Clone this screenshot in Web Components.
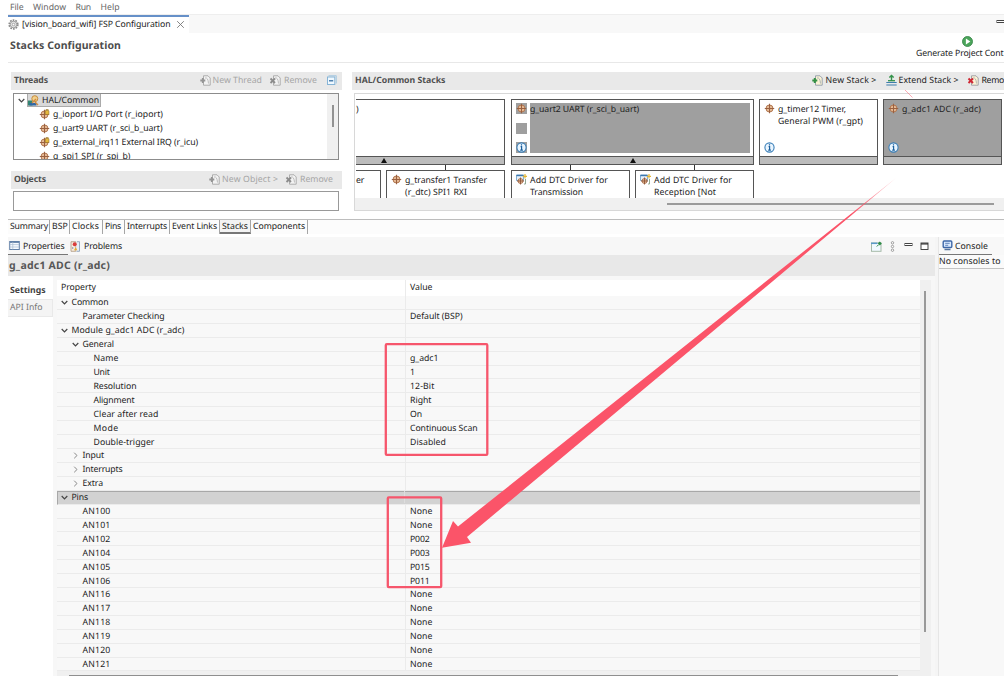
<!DOCTYPE html>
<html lang="en">
<head>
<meta charset="utf-8">
<title>FSP Configuration</title>
<style>
    html, body {
        margin: 0;
        width: 1004px;
        height: 692px;
        overflow: hidden;
        background: #fff;
    }
</style>
</head>
<body>
<config-app></config-app>

<script>
// Label whose letter spacing is tuned so that it takes up the width in its "w" attribute
class FitText extends HTMLElement
{
    constructor()
    {
        super();
        this.attachShadow({mode: 'open'});
    }

    connectedCallback()
    {
        this.shadowRoot.innerHTML =
        `<style>
            :host { display: block; flex: none; white-space: pre; }
            span { display: inline-block; }
        </style><span><slot></slot></span>`;

        const w = Number(this.getAttribute('w'));
        if (!w) return;

        const span = this.shadowRoot.querySelector('span');
        const natural = span.getBoundingClientRect().width;
        span.style.letterSpacing = (w - natural) / this.textContent.length + 'px';
        this.style.width = w + 'px';
    }
}

const module = `
    <circle cx="5.5" cy="5.5" r="3.5" fill="#e8bd98" stroke="#b1764f"/>
    <path d="M5.5 .8V10.200M.8 5.500H10.200" stroke="#9a6040" stroke-width="1.100"/>`;

const page = (mark, paper, edge) => `
    <path d="M3.500 .8h4.500l2.200 2.200v7.200H3.500z" fill="${paper}" stroke="${edge}" stroke-width=".9"/>
    <path d="M5 3q3-1 3.500 5.500" fill="none" stroke="${edge}" stroke-width=".7"/>${mark}`;

const icons = {
    module: module,
    lock: module + `<rect x="6.300" y="1.500" width="3.600" height="4" rx=".6" fill="#e5b83b" stroke="#a07a2a" stroke-width=".7"/><path d="M7 1.500V.5h2.200v1" fill="none" stroke="#a07a2a" stroke-width=".7"/>`,
    add: page('<path d="M.3 5.500h5M2.800 3v5" stroke="#359044" stroke-width="2"/>', '#fbf3d5', '#8e9aa8'),
    addOff: page('<path d="M.3 5.500h5M2.800 3v5" stroke="#959595" stroke-width="1.800"/>', '#f3f3f3', '#a6a6a6'),
    remove: page('<path d="M.5 3.500l4.500 4.500m0-4.500L.5 8" stroke="#cf2733" stroke-width="1.900"/>', '#fbf3d5', '#9a9aa0'),
    removeOff: page('<path d="M.5 3.500l4.500 4.500m0-4.500L.5 8" stroke="#8c8c8c" stroke-width="1.800"/>', '#f3f3f3', '#a6a6a6'),
    extend: `<path d="M5.500 0v6M3.300 2.500l2.200-2 2.200 2" fill="none" stroke="#35924a" stroke-width="1.400"/><path d="M2 5.700h7" stroke="#35924a" stroke-width="1.300"/><path d="M.3 7.500h10.400M.3 10h10.400" stroke="#3f7eae" stroke-width="1.200"/>`,
    collapse: `<path d="M2.500 .7h7.800v7.800" fill="none" stroke="#a9cbe2"/><rect x="1.500" y="2" width="7.300" height="7.500" fill="#eff8ff" stroke="#86b4d6"/><path d="M3 5.800h4.200" stroke="#28649c" stroke-width="1.200"/>`,
    gear: `<circle cx="5.500" cy="5.500" r="4.300" fill="none" stroke="#8b8b8b" stroke-width="1.700" stroke-dasharray="1.700 1"/><circle cx="5.500" cy="5.500" r="3.200" fill="#ececec" stroke="#999"/><circle cx="5.500" cy="5.500" r="1.300" fill="#fff" stroke="#888" stroke-width=".7"/>`,
    hal: `<path d="M0 5.500h4.500v5H0z" fill="#34866f"/><path d="M1.500 8h7v2.500h-7z" fill="#2f67a5"/><circle cx="6.800" cy="3.700" r="3" fill="#f2d08a" stroke="#c78d3e"/><path d="M4 8l4-4M7 7l3 3" stroke="#cf8a40" stroke-width="1.400"/>`,
    info: `<circle cx="5.500" cy="5.500" r="4.600" fill="#e9f5ff" stroke="#3a7fb8" stroke-width="1.100"/><path d="M5.500 2.300v1.300M4.600 4.700h1v3.500M4.200 8.200h2.700" fill="none" stroke="#1a5f9d" stroke-width="1.200"/>`,
    driver: `<path d="M.5 1h7v5.500h-7z" fill="#e7f1fa" stroke="#659ac6" stroke-width=".8"/><path d="M.5 1.500h7" stroke="#3c78b0" stroke-width="1.400"/><circle cx="4.500" cy="7" r="2.500" fill="#e8bd98" stroke="#a36a48" stroke-width=".8"/><path d="M4.500 3.500v7M1 7h7" stroke="#8d5638" stroke-width=".9"/><path d="M9 0v4.600M6.800 2.300h4.200" stroke="#e3b535" stroke-width="1.200"/><path d="M9.500 5v5H8" fill="none" stroke="#8fa894"/>`,
    run: `<circle cx="5.500" cy="5.500" r="5" fill="#4ca55b" stroke="#2d7f40" stroke-width=".8"/><path d="M3.900 2.600v5.800L8.300 5.500z" fill="#fff"/>`,
    props: `<rect x=".7" y="1.500" width="9.600" height="8" fill="#f8fbff" stroke="#6280a8"/><path d="M1 2.200h9" stroke="#6280a8" stroke-width="1.400"/><path d="M3.800 2v7.500M1 4.600h9M1 7h9" stroke="#a9bad0" stroke-width=".7"/>`,
    problems: `<path d="M1 .7h4.800v9.600H1z" fill="#f6ecdf" stroke="#ad977f" stroke-width=".8"/><path d="M7 .7h2.500v9.600H6.500" fill="#e7eef7" stroke="#8299b5" stroke-width=".8"/><circle cx="4.700" cy="3.300" r="2" fill="#d93c3c"/><path d="M4 9.300l1.700-3 1.600 3z" fill="#e8ac32"/><path d="M2 7h1.300" stroke="#51709a"/>`,
    pin: `<rect x=".5" y="2" width="9.500" height="8.300" fill="#f2faff" stroke="#a5b9a8"/><path d="M0 2.300h6.500" stroke="#5b9ac9" stroke-width="1.500"/><path d="M5.800 5.500l2-2" stroke="#2d8b45"/><path d="M6.800 2.300l2-1.800 2 2-2 2z" fill="#2d8b45"/>`,
    dots: `<g fill="#fff" stroke="#888" stroke-width=".8"><circle cx="5.500" cy="1.800" r="1.200"/><circle cx="5.500" cy="5.500" r="1.200"/><circle cx="5.500" cy="9.200" r="1.200"/></g>`,
    min: `<rect x="2" y="2.500" width="7" height="2" fill="#fff" stroke="#444"/>`,
    max: `<rect x="2" y="2" width="7" height="6.500" fill="#fff" stroke="#333" stroke-width=".9"/><path d="M2 2.900h7" stroke="#333" stroke-width="1.300"/>`,
    console: `<rect x="1.200" y="1" width="8.600" height="6.500" rx="1" fill="#dcebff" stroke="#3d67a8" stroke-width="1.400"/><path d="M3.200 3.300h4.500M3.200 5.300h3" stroke="#3d67a8" stroke-width=".8"/><path d="M2.500 9.500h6" stroke="#56749f" stroke-width="1.500"/>`,
    close: `<path d="M2.200 2.200l6.600 6.600m0-6.600L2.200 8.800" stroke="#777" stroke-width=".9"/>`,
    open: `<path d="M2.700 4l2.800 2.800L8.300 4" fill="none" stroke="#444" stroke-width="1.200"/>`,
    shut: `<path d="M4.200 2.700L7 5.500 4.200 8.300" fill="none" stroke="#888"/>`
};

class UiIcon extends HTMLElement
{
    constructor()
    {
        super();
        this.attachShadow({mode: 'open'});
    }

    connectedCallback()
    {
        this.shadowRoot.innerHTML =
        `<style>
            :host { display: block; flex: none; width: 11px; height: 11px; }
            svg { display: block; overflow: visible; }
        </style>
        <svg width="11" height="11" viewBox="0 0 11 11">${icons[this.getAttribute('name')]}</svg>`;
    }
}

// Grey heading with buttons at its right end
class SectionBar extends HTMLElement
{
    constructor()
    {
        super();
        this.attachShadow({mode: 'open'});
    }

    connectedCallback()
    {
        this.shadowRoot.innerHTML =
        `<style>
            :host {
                display: flex;
                align-items: center;
                height: 18px;
                box-sizing: border-box;
                padding: 0 0 2px 3px;
                background: #e9e9e9;
            }
            ::slotted([slot=title]) { font-weight: bold; color: #505050; }
            .tools { display: flex; align-items: center; margin-left: auto; }
        </style>
        <slot name="title"></slot>
        <div class="tools"><slot></slot></div>`;
    }
}

class StackTree extends HTMLElement
{
    constructor()
    {
        super();
        this.attachShadow({mode: 'open'});
    }

    connectedCallback()
    {
        const items = [
            ['lock', 'g_ioport I/O Port (r_ioport)', 110],
            ['module', 'g_uart9 UART (r_sci_b_uart)', 109.5],
            ['lock', 'g_external_irq11 External IRQ (r_icu)', 145],
            ['module', 'g_spi1 SPI (r_spi_b)', 77.5]
        ];

        this.shadowRoot.innerHTML =
        `<style>
            :host {
                display: flex;
                box-sizing: border-box;
                width: 326px;
                height: 67px;
                border: 1px solid #8c8c8c;
                overflow: hidden;
                background: #fff;
            }
            .list { flex: 1; margin-top: -1px; }
            .row { display: flex; align-items: center; height: 14px; }
            .root { padding-left: 2px; }
            .picked {
                display: flex;
                align-items: center;
                gap: 3px;
                box-sizing: border-box;
                height: 14px;
                padding: 0 1px 0 0;
                border: 1px solid #aaa;
                background: #d9d9d9;
            }
            .item { padding-left: 25px; gap: 3px; }
            .bar { width: 11px; background: #f0f0f0; }
            .thumb { width: 2px; height: 22px; margin: 11px 0 0 5px; background: #929292; }
        </style>
        <div class="list">
            <div class="row root"><ui-icon name="open"></ui-icon><div class="picked"><ui-icon name="hal"></ui-icon><fit-text w="57">HAL/Common</fit-text></div></div>
            ${items.map(([icon, label, w]) => `<div class="row item"><ui-icon name="${icon}"></ui-icon><fit-text w="${w}">${label}</fit-text></div>`).join('')}
        </div>
        <div class="bar"><div class="thumb"></div></div>`;
    }
}

// One box of the stacks diagram
class StackBlock extends HTMLElement
{
    constructor()
    {
        super();
        this.attachShadow({mode: 'open'});
    }

    connectedCallback()
    {
        const icon = this.getAttribute('icon');
        const child = this.hasAttribute('child');

        this.shadowRoot.innerHTML =
        `<style>
            :host {
                display: flex;
                flex-direction: column;
                flex: none;
                box-sizing: border-box;
                width: 119px;
                height: 66px;
                border: 1px solid #555;
                background: #fff;
                line-height: 12px;
            }
            :host([child]) { height: 60px; }
            :host([cut]) { border-left: 0; }
            :host([selected]) { background: #9f9f9f; }
            .body { display: flex; flex: 1; min-height: 0; padding: 3px 3px 3px 4px; gap: 2px; }
            .side { display: flex; flex-direction: column; justify-content: space-between; width: 12px; }
            .side > * { width: 11px; height: 11px; }
            .text { flex: 1; }
            :host([cut]) .body { padding-left: 0; }
            :host([marked]) .side > *, :host([marked]) .text { background: #9f9f9f; }
            .foot {
                display: flex;
                justify-content: center;
                align-items: center;
                height: 7px;
                border-top: 1px solid #555;
                background: #bcbcbc;
            }
            .foot svg { margin-left: var(--arrow-shift, 0); }
        </style>
        <div class="body">
            ${icon ? `<div class="side"><ui-icon name="${icon}"></ui-icon>
                ${this.hasAttribute('marked') ? '<i></i>' : ''}
                ${child ? '' : '<ui-icon name="info"></ui-icon>'}</div>` : ''}
            <div class="text"><slot></slot></div>
        </div>
        ${child ? '' : `<div class="foot">${this.hasAttribute('arrow') ? '<svg width="6" height="5"><path d="M0 5L3 0L6 5z" fill="#111"/></svg>' : ''}</div>`}`;
    }
}

class StackCanvas extends HTMLElement
{
    constructor()
    {
        super();
        this.attachShadow({mode: 'open'});
    }

    connectedCallback()
    {
        this.shadowRoot.innerHTML =
        `<style>
            :host {
                display: flex;
                flex-direction: column;
                box-sizing: border-box;
                height: 118px;
                border: 1px solid #d8d8d8;
                border-right: 0;
                background: #fff;
            }
            .view { display: flex; flex: 1; min-height: 0; gap: 6px; padding: 5px 0 0 1px; overflow: hidden; }
            .kids { display: flex; gap: 5px; }
            .kid { display: flex; flex-direction: column; align-items: center; }
            .kid::before { content: ''; width: 1px; height: 5px; background: #333; }
            .kid.plain::before { background: none; }
            .wide { width: 243px; }
            .bar { height: 12px; background: #f0f0f0; }
            .thumb { width: 327px; height: 2px; margin: 5px 0 0 312px; background: #9b9b9b; }
        </style>
        <div class="view">
            <div>
                <stack-block cut arrow style="width: 149px; --arrow-shift: -92px"><fit-text w="3">)</fit-text></stack-block>
                <div class="kids">
                    <div class="kid plain"><stack-block child cut style="width: 25px"><fit-text w="8">er</fit-text></stack-block></div>
                    <div class="kid"><stack-block child icon="module"><fit-text w="82">g_transfer1 Transfer</fit-text><fit-text w="62">(r_dtc) SPI1 RXI</fit-text></stack-block></div>
                </div>
            </div>
            <div>
                <stack-block class="wide" marked arrow icon="module"><fit-text w="109">g_uart2 UART (r_sci_b_uart)</fit-text></stack-block>
                <div class="kids">
                    <div class="kid"><stack-block child icon="driver"><fit-text w="78">Add DTC Driver for</fit-text><fit-text w="53">Transmission</fit-text></stack-block></div>
                    <div class="kid"><stack-block child icon="driver"><fit-text w="78">Add DTC Driver for</fit-text><fit-text w="62">Reception [Not</fit-text></stack-block></div>
                </div>
            </div>
            <stack-block icon="module" style="margin-left: -1px"><fit-text w="68">g_timer12 Timer,</fit-text><fit-text w="85">General PWM (r_gpt)</fit-text></stack-block>
            <stack-block icon="module" selected style="margin-left: -1px"><fit-text w="79">g_adc1 ADC (r_adc)</fit-text></stack-block>
        </div>
        <div class="bar"><div class="thumb"></div></div>`;
    }
}

class PageTabs extends HTMLElement
{
    constructor()
    {
        super();
        this.attachShadow({mode: 'open'});
    }

    connectedCallback()
    {
        // label, tab width, text width
        const tabs = [
            ['Summary', 42, 38], ['BSP', 20, 16], ['Clocks', 33, 27], ['Pins', 22, 16],
            ['Interrupts', 45, 40], ['Event Links', 50, 45], ['Stacks', 31, 26], ['Components', 57, 52]
        ];

        this.shadowRoot.innerHTML =
        `<style>
            :host {
                display: flex;
                box-sizing: border-box;
                height: 15px;
                border-top: 1px solid #bdbdbd;
                background: #fcfcfc;
            }
            div {
                display: flex;
                align-items: center;
                box-sizing: border-box;
                height: 14px;
                padding: 0 0 2px 2px;
                border-right: 1px solid #a5a5a5;
            }
            div:first-child { padding-left: 1px; }
            .on { background: #f3f3f3; border-bottom: 2px solid #777; padding-bottom: 0; }
        </style>
        ${tabs.map(([label, w, tw]) => `<div style="width: ${w}px" class="${label == 'Stacks' ? 'on' : ''}"><fit-text w="${tw}">${label}</fit-text></div>`).join('')}`;
    }
}

class PropertyTable extends HTMLElement
{
    constructor()
    {
        super();
        this.attachShadow({mode: 'open'});
    }

    connectedCallback()
    {
        // depth, arrow, label, label width, value, value width
        const rows = [
            [0, 'open', 'Common', 37],
            [1, '', 'Parameter Checking', 82, 'Default (BSP)', 52.5],
            [0, 'open', 'Module g_adc1 ADC (r_adc)', 113],
            [1, 'open', 'General', 31.5],
            [2, '', 'Name', 25, 'g_adc1', 28.5],
            [2, '', 'Unit', 16, '1', 4],
            [2, '', 'Resolution', 43, '12-Bit', 24.5],
            [2, '', 'Alignment', 41, 'Right', 21.5],
            [2, '', 'Clear after read', 65, 'On', 12],
            [2, '', 'Mode', 25, 'Continuous Scan', 67.5],
            [2, '', 'Double-trigger', 61, 'Disabled', 36],
            [1, 'shut', 'Input', 21.5],
            [1, 'shut', 'Interrupts', 40],
            [1, 'shut', 'Extra', 20.5],
            [0, 'open', 'Pins', 16.5]
        ];
        const pins = {
            AN100: 'None', AN101: 'None', AN102: 'P002', AN104: 'P003', AN105: 'P015', AN106: 'P011',
            AN116: 'None', AN117: 'None', AN118: 'None', AN119: 'None', AN120: 'None', AN121: 'None'
        };
        for (const name in pins)
        {
            rows.push([1, '', name, 28, pins[name], pins[name] == 'None' ? 22.5 : 19.5]);
        }

        this.shadowRoot.innerHTML =
        `<style>
            :host { display: grid; grid-template-columns: 863px 11px; grid-template-rows: 392px 5px; background: #f0f0f0; }
            .row, .head { display: flex; align-items: center; box-sizing: border-box; }
            .head { height: 16px; background: #fff; }
            .head fit-text { padding-bottom: 2px; }
            .row { height: 13.920px; background: #f8f8f8; border-bottom: 1px solid #ebebeb; }
            .key { display: flex; align-items: center; box-sizing: border-box; width: 349px; height: 100%; border-right: 1px solid #ebebeb; }
            .head .key { padding-left: 4px; }
            .mark { width: 11px; height: 11px; margin-right: 2px; }
            .value { padding-left: 4px; }
            .picked { background: #d2d2d2; border-top: 1px solid #a8a8a8; border-left: 1px solid #a8a8a8; }
            .picked .key { width: 348px; margin: -1px 0 0 -1px; border-color: #ddd; }
            .v { width: 2px; height: 341px; margin: 11px 0 0 4px; background: #999; }
            .h { width: 829px; height: 2px; margin: 3px 0 0 12px; background: #8f8f8f; }
        </style>
        <div>
            <div class="head"><div class="key"><fit-text w="35">Property</fit-text></div><div class="value"><fit-text w="22.5">Value</fit-text></div></div>
            ${rows.map(([depth, arrow, label, w, value, vw]) =>
                `<div class="row ${label == 'Pins' ? 'picked' : ''}">
                    <div class="key" style="padding-left: ${1.5 + depth * 11}px">
                        <div class="mark">${arrow ? `<ui-icon name="${arrow}"></ui-icon>` : ''}</div><fit-text w="${w}">${label}</fit-text>
                    </div>
                    <div class="value">${value ? `<fit-text w="${vw}">${value}</fit-text>` : ''}</div>
                </div>`).join('')}
        </div>
        <div><div class="v"></div></div>
        <div><div class="h"></div></div>`;
    }
}

// Red frames and arrow drawn over the window
class MarkUp extends HTMLElement
{
    constructor()
    {
        super();
        this.attachShadow({mode: 'open'});
    }

    connectedCallback()
    {
        this.shadowRoot.innerHTML =
        `<style>
            :host { position: absolute; left: 0; top: 0; pointer-events: none; }
            svg { display: block; }
        </style>
        <svg width="1004" height="692" fill="none">
            <defs>
                <linearGradient id="fade" gradientUnits="userSpaceOnUse" x1="896" y1="178" x2="850" y2="214">
                    <stop offset="0" stop-color="#fb5469" stop-opacity=".3"/>
                    <stop offset="1" stop-color="#fb5469"/>
                </linearGradient>
            </defs>
            <rect x="385.800" y="344.200" width="101.500" height="110.700" rx="1" stroke="#f6566c" stroke-width="2.300"/>
            <rect x="387.800" y="497.400" width="53.400" height="89.800" rx="1" stroke="#f6566c" stroke-width="2.300"/>
            <path d="M442 547.800L453 521L458 526.500L896 178L467 537L471 542.700Z" fill="url(#fade)"/>
            <path d="M905 90l7.500 7.500" stroke="#fb5469" stroke-width=".7" opacity=".7"/>
        </svg>`;
    }
}

class ConfigApp extends HTMLElement
{
    constructor()
    {
        super();
        this.attachShadow({mode: 'open'});
    }

    connectedCallback()
    {
        this.shadowRoot.innerHTML =
        `<style>
            :host {
                display: block;
                box-sizing: border-box;
                width: 1004px;
                height: 676px;
                padding-left: 8px;
                overflow: hidden;
                font: 8.700px/12px "Noto Sans", "Open Sans", sans-serif;
                text-rendering: geometricPrecision;
                color: #222;
            }
            .menu, .tabs, .tab, .title, .views, .view, .columns, .lower { display: flex; }
            .menu { height: 14px; padding-left: 2px; gap: 9.500px; align-items: center; color: #666; }
            .tabs { height: 18px; border-top: 1px solid #eee; background: #f8f8f8; justify-content: space-between; }
            .tab { box-sizing: border-box; width: 181px; padding-bottom: 2px; border-top: 2px solid #6690c8; background: #fff; align-items: center; }
            .title { box-sizing: border-box; height: 30px; padding-left: 2px; border-bottom: 1px solid #e8e8e8; justify-content: space-between; }
            .title > fit-text { padding-top: 7px; font-size: 10.500px; font-weight: bold; color: #4d4d4d; }
            .generate { width: 88px; padding-top: 3px; }
            .generate ui-icon { margin-left: 46px; }
            .columns { height: 155px; padding-top: 9px; box-sizing: border-box; }
            .threads { width: 331px; margin-left: 3px; }
            .stacks { width: 652px; margin-left: 10px; }
            stack-tree { margin: 3px 0 11px 2px; }
            .objects { box-sizing: border-box; width: 326px; height: 20px; margin: 2px 0 0 2px; border: 1px solid #999; }
            stack-canvas { margin: 3px 0 0 2px; }
            .off { color: #a5a5a5; }
            .lower { height: 440px; margin-top: 3px; background: #f5f5f5; }
            .props { width: 927px; background: #f7f7f7; }
            .views { height: 18px; }
            .view { box-sizing: border-box; align-items: center; }
            .view.on { border-bottom: 1px solid #777; }
            .right { display: flex; gap: 5px; align-items: center; margin-left: auto; }
            .subject { display: flex; align-items: center; height: 21px; padding-left: 1px; background: #e8e8e8; color: #565656; font-weight: bold; font-size: 10.500px; }
            .body { display: flex; height: 401px; }
            .nav { width: 45px; padding-top: 7px; background: #fff; }
            .nav div { box-sizing: border-box; display: flex; align-items: center; height: 16px; padding: 0 0 2px 2px; }
            .nav .second { height: 18px; background: #f4f4f4; border: 1px solid #e9e9e9; border-left: 0; color: #777; }
            property-table { margin: 4px 0 0 4px; }
            .console { flex: 1; margin-left: 3px; background: #f8f8f8; border-left: 1px solid #e6e6e6; overflow: hidden; }
            .none { height: 13px; border-bottom: 1px solid #c4c4c4; background: #fafafa; }
        </style>

        <div class="menu">
            <fit-text w="13.5">File</fit-text><fit-text w="33">Window</fit-text><fit-text w="15.5">Run</fit-text><fit-text w="19">Help</fit-text>
        </div>

        <div class="tabs">
            <div class="tab">
                <ui-icon name="gear"></ui-icon>
                <fit-text w="148.5" style="margin: 0 4px 0 3px">[vision_board_wifi] FSP Configuration</fit-text>
                <ui-icon name="close"></ui-icon>
            </div>
            <ui-icon name="min" style="width: 9px; margin-top: 3px"></ui-icon>
        </div>

        <div class="title">
            <fit-text w="111">Stacks Configuration</fit-text>
            <div class="generate"><ui-icon name="run"></ui-icon><fit-text w="87.5">Generate Project Cont</fit-text></div>
        </div>

        <div class="columns">
            <div class="threads">
                <section-bar class="off">
                    <fit-text slot="title" w="34">Threads</fit-text>
                    <ui-icon name="addOff"></ui-icon><fit-text w="49.5" style="margin: 0 8px 0 2px">New Thread</fit-text>
                    <ui-icon name="removeOff"></ui-icon><fit-text w="33" style="margin: 0 9px 0 3px">Remove</fit-text>
                    <ui-icon name="collapse" style="margin-right: 5px"></ui-icon>
                </section-bar>
                <stack-tree></stack-tree>
                <section-bar class="off">
                    <fit-text slot="title" w="32">Objects</fit-text>
                    <ui-icon name="addOff"></ui-icon><fit-text w="56" style="margin: 0 8px 0 2px">New Object &gt;</fit-text>
                    <ui-icon name="removeOff"></ui-icon><fit-text w="33" style="margin: 0 9px 0 3px">Remove</fit-text>
                </section-bar>
                <div class="objects"></div>
            </div>
            <div class="stacks">
                <section-bar>
                    <fit-text slot="title" w="90.5">HAL/Common Stacks</fit-text>
                    <ui-icon name="add"></ui-icon><fit-text w="51" style="margin: 0 9px 0 3px">New Stack &gt;</fit-text>
                    <ui-icon name="extend"></ui-icon><fit-text w="60" style="margin: 0 9px 0 2px">Extend Stack &gt;</fit-text>
                    <ui-icon name="remove"></ui-icon><fit-text w="22.5" style="margin: 0 0 0 3px">Remo</fit-text>
                </section-bar>
                <stack-canvas></stack-canvas>
            </div>
        </div>

        <page-tabs style="margin-top: 1px"></page-tabs>

        <div class="lower">
            <div class="props">
                <div class="views">
                    <div class="view on" style="width: 60px"><ui-icon name="props" style="margin: 0 3px 0 1px"></ui-icon><fit-text w="41.5">Properties</fit-text></div>
                    <div class="view" style="padding-left: 2px"><ui-icon name="problems" style="margin-right: 3px"></ui-icon><fit-text w="38">Problems</fit-text></div>
                    <div class="right"><ui-icon name="pin"></ui-icon><ui-icon name="dots"></ui-icon><ui-icon name="min"></ui-icon><ui-icon name="max" style="margin-right: 5px"></ui-icon></div>
                </div>
                <div class="subject"><fit-text w="101">g_adc1 ADC (r_adc)</fit-text></div>
                <div class="body">
                    <div class="nav">
                        <div><fit-text w="35.5" style="font-weight: bold; color: #444">Settings</fit-text></div>
                        <div class="second"><fit-text w="32.5">API Info</fit-text></div>
                    </div>
                    <property-table></property-table>
                </div>
            </div>
            <div class="console">
                <div class="views"><div class="view on" style="width: 53px"><ui-icon name="console" style="margin: 0 2px 0 3px"></ui-icon><fit-text w="33">Console</fit-text></div></div>
                <div class="none"><fit-text w="61.5">No consoles to</fit-text></div>
            </div>
        </div>
        <mark-up></mark-up>`;
    }
}

window.customElements.define('fit-text', FitText);
window.customElements.define('ui-icon', UiIcon);
window.customElements.define('section-bar', SectionBar);
window.customElements.define('stack-tree', StackTree);
window.customElements.define('stack-block', StackBlock);
window.customElements.define('stack-canvas', StackCanvas);
window.customElements.define('page-tabs', PageTabs);
window.customElements.define('property-table', PropertyTable);
window.customElements.define('mark-up', MarkUp);
window.customElements.define('config-app', ConfigApp);
</script>
</body>
</html>
